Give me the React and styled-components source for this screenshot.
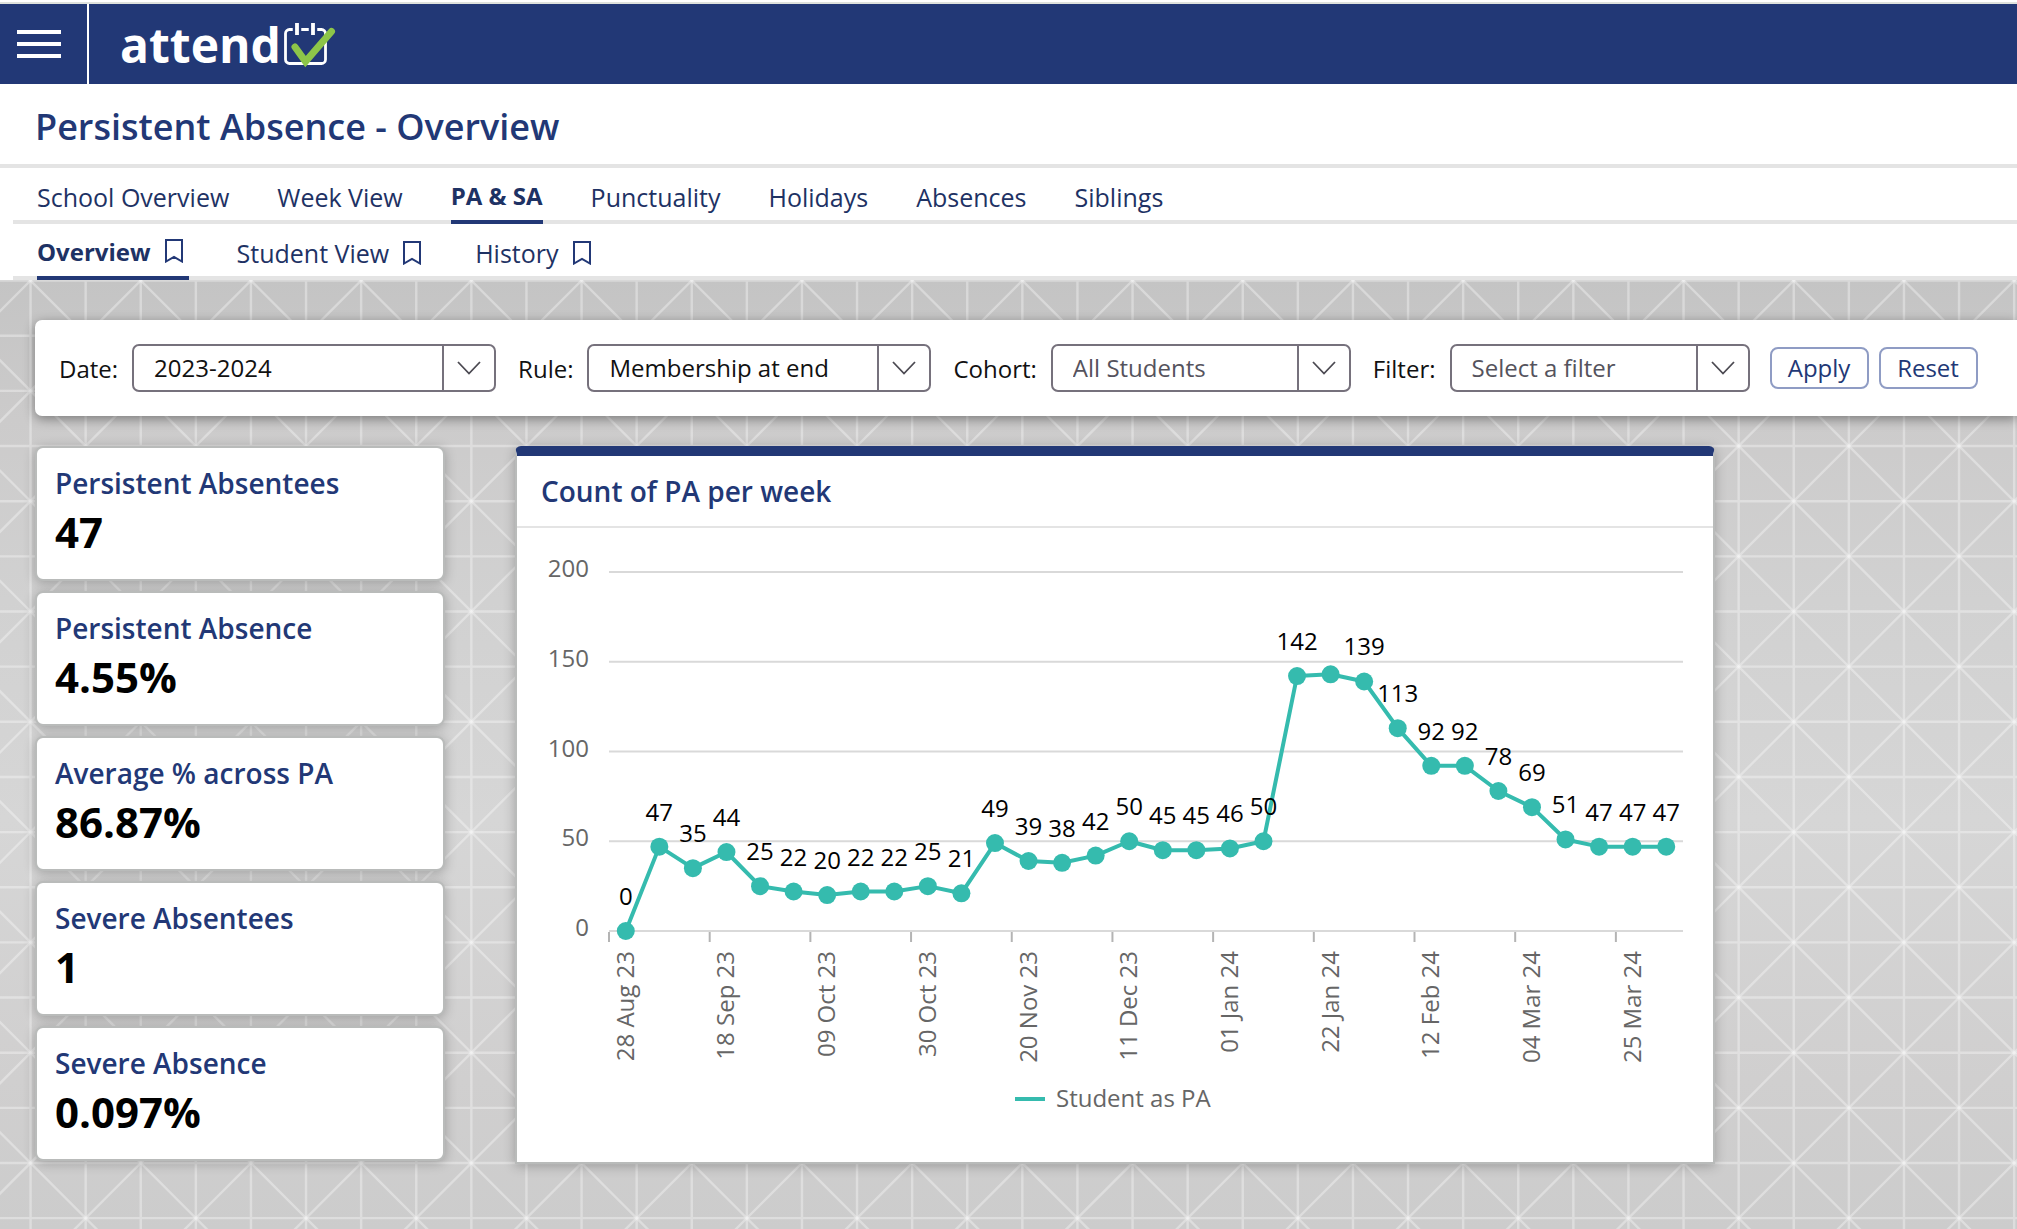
import React, { useState } from 'react'
import styled, { createGlobalStyle, ThemeProvider } from 'styled-components'

const theme = {
  colors: {
    navy: '#223876',
    darkblue: '#1e3264',
    teal: '#35bbae',
    line: '#e4e4e4',
    grid: '#d9d9d9',
    gray: '#666666',
    field: '#76717c',
    placeholder: '#55535d',
    cardBorder: '#b9bbba',
  },
}

// triangle lattice, ten tiles across and ten down
const TILE_W = 110.2
const TILE_H = 110.3
const lattice = () => {
  let straight = ''
  let falling = ''
  let rising = ''
  for (let i = 0; i < 20; i++) {
    straight += `M${(i + 0.5) * (TILE_W / 2)} 0V1103M0 ${(i + 0.5) * (TILE_H / 2)}H1102`
  }
  for (let k = -10; k < 20; k++) {
    falling += `M${k * TILE_W} 0l1102 1103`
    rising += `M${(k + 0.5) * TILE_W} 0l-1102 1103`
  }
  const svg = `<svg xmlns="http://www.w3.org/2000/svg" width="1102" height="1103" viewBox="0 0 1102 1103" fill="none" stroke="#fff" stroke-width="2.4" stroke-opacity=".34"><path d="${straight}"/><path d="${falling}"/><path d="${rising}"/></svg>`
  return `url("data:image/svg+xml,${encodeURIComponent(svg)}")`
}

const tabs = ['School Overview', 'Week View', 'PA & SA', 'Punctuality', 'Holidays', 'Absences', 'Siblings']
const subTabs = ['Overview', 'Student View', 'History']

const filters = [
  { id: 'date', label: 'Date:', value: '2023-2024', width: 364 },
  { id: 'rule', label: 'Rule:', value: 'Membership at end', width: 344 },
  { id: 'cohort', label: 'Cohort:', value: 'All Students', width: 300, muted: true },
  { id: 'filter', label: 'Filter:', value: 'Select a filter', width: 300, muted: true },
]

const stats = [
  { title: 'Persistent Absentees', value: '47' },
  { title: 'Persistent Absence', value: '4.55%' },
  { title: 'Average % across PA', value: '86.87%' },
  { title: 'Severe Absentees', value: '1' },
  { title: 'Severe Absence', value: '0.097%' },
]

const weekly = [
  0, 47, 35, 44, 25, 22, 20, 22, 22, 25, 21, 49, 39, 38, 42, 50, 45, 45, 46, 50, 142, 143, 139, 113, 92, 92,
  78, 69, 51, 47, 47, 47,
]
const weekLabels = [
  '28 Aug 23', '18 Sep 23', '09 Oct 23', '30 Oct 23', '20 Nov 23', '11 Dec 23',
  '01 Jan 24', '22 Jan 24', '12 Feb 24', '04 Mar 24', '25 Mar 24',
]

const PLOT = { left: 92, right: 1166, top: 44, bottom: 403 }
const step = (PLOT.right - PLOT.left) / weekly.length
const xAt = (i) => PLOT.left + step * (i + 0.5)
const yAt = (v) => PLOT.bottom - ((PLOT.bottom - PLOT.top) * v) / 200

function Logo() {
  return (
    <LogoLink href='#home' aria-label='attend home'>
      attend
      <svg width='52' height='46' viewBox='0 0 52 46' fill='none' overflow='visible'>
        <rect x='2.5' y='8.5' width='40' height='34' rx='4' stroke='#fff' strokeWidth='2.8' />
        <path d='M14 5v7M30 5v7' stroke='#223876' strokeWidth='8.5' />
        <path d='M14 2v12M30 2v12' stroke='#fff' strokeWidth='3.8' />
        <path d='M12 26L22.5 40.500L48.500 10.500' stroke='#8dc549' strokeWidth='7' strokeLinecap='round' />
      </svg>
    </LogoLink>
  )
}

function Bookmark() {
  return (
    <svg width='18' height='24' viewBox='0 0 18 24' fill='none' stroke='#223876' strokeWidth='2'>
      <path d='M1 1h16v21.500l-8-4.500l-8 4.500z' />
    </svg>
  )
}

function Chart() {
  return (
    <ChartSvg viewBox='0 0 1196 634' role='img' aria-label='Count of PA per week'>
      {[0, 50, 100, 150, 200].map((v) => (
        <g key={v}>
          <line className='grid' x1={PLOT.left} x2={PLOT.right} y1={yAt(v)} y2={yAt(v)} />
          <text className='axis' x='72' y={yAt(v) + 5} textAnchor='end'>
            {v}
          </text>
        </g>
      ))}
      {weekLabels.map((label, i) => (
        <g key={label}>
          <line
            className='tick'
            x1={PLOT.left + step * i * 3}
            x2={PLOT.left + step * i * 3}
            y1={PLOT.bottom + 1}
            y2={PLOT.bottom + 11}
          />
          <text
            className='axis'
            textAnchor='end'
            transform={`translate(${xAt(i * 3) + 8} ${PLOT.bottom + 20}) rotate(-90)`}
          >
            {label}
          </text>
        </g>
      ))}
      <polyline className='series' points={weekly.map((v, i) => `${xAt(i)},${yAt(v)}`).join(' ')} />
      {weekly.map((v, i) => (
        <circle key={i} className='dot' cx={xAt(i)} cy={yAt(v)} r='9' />
      ))}
      {weekly.map(
        (v, i) =>
          v !== 143 && (
            <text key={i} className='value' x={xAt(i)} y={yAt(v) - 26} textAnchor='middle'>
              {v}
            </text>
          )
      )}
      <line className='series' x1='498' x2='528' y1='571' y2='571' />
      <text className='axis' x='539' y='579'>
        Student as PA
      </text>
    </ChartSvg>
  )
}

function App() {
  const [tab, setTab] = useState('PA & SA')
  const [subTab, setSubTab] = useState('Overview')

  return (
    <ThemeProvider theme={theme}>
      <GlobalStyle />
      <Page>
        <TopBar>
          <MenuButton aria-label='Menu'>
            <span />
            <span />
            <span />
          </MenuButton>
          <Logo />
        </TopBar>
        <TitleBar>
          <h1>Persistent Absence - Overview</h1>
        </TitleBar>
        <TabBar>
          {tabs.map((name) => (
            <Tab key={name} href='#tab' $active={name === tab} onClick={() => setTab(name)}>
              {name}
            </Tab>
          ))}
        </TabBar>
        <TabBar>
          {subTabs.map((name) => (
            <SubTab key={name} href='#view' $active={name === subTab} onClick={() => setSubTab(name)}>
              {name}
              <Bookmark />
            </SubTab>
          ))}
        </TabBar>
        <Main>
          <FilterBar onSubmit={(e) => e.preventDefault()}>
            {filters.map(({ id, label, value, width, muted }) => (
              <Field key={id}>
                <label htmlFor={id}>{label}</label>
                <SelectBox $width={width} $muted={muted}>
                  <select id={id}>
                    <option>{value}</option>
                  </select>
                  <svg width='24' height='14' viewBox='0 0 24 14' fill='none' stroke='#4c4a52' strokeWidth='1.800'>
                    <path d='M1 1l11 11.500l11-11.500' />
                  </svg>
                </SelectBox>
              </Field>
            ))}
            <Actions>
              <Button type='submit'>Apply</Button>
              <Button type='reset'>Reset</Button>
            </Actions>
          </FilterBar>
          <Content>
            <Stats>
              {stats.map(({ title, value }) => (
                <StatCard key={title}>
                  <h2>{title}</h2>
                  <p>{value}</p>
                </StatCard>
              ))}
            </Stats>
            <ChartCard>
              <h2>Count of PA per week</h2>
              <Chart />
            </ChartCard>
          </Content>
        </Main>
      </Page>
    </ThemeProvider>
  )
}

const GlobalStyle = createGlobalStyle`
  * {
    box-sizing: border-box;
    margin: 0;
    padding: 0;
  }
  body {
    background: white;
    font-family: 'Open Sans', 'Noto Sans', sans-serif;
    font-size: 24px;
    overflow-x: hidden;
  }
  a {
    text-decoration: none;
  }
  svg {
    display: block;
    flex-shrink: 0;
  }
`

const Page = styled.div`
  min-height: 100vh;
  display: flex;
  flex-direction: column;
  padding-top: 2px;
`

const TopBar = styled.header`
  display: flex;
  height: 82px;
  border-top: 2px solid #dfe2dd;
  background-color: ${({ theme }) => theme.colors.navy};
`

const MenuButton = styled.button`
  display: flex;
  flex-direction: column;
  gap: 8px;
  width: 89px;
  padding: 26px 26px 0 17px;
  border: none;
  border-right: 2px solid white;
  background: none;
  cursor: pointer;
  span {
    height: 4px;
    background-color: white;
  }
`

const LogoLink = styled.a`
  display: flex;
  align-items: center;
  gap: 2px;
  padding-left: 31px;
  color: white;
  font-size: 48px;
  font-weight: 700;
`

const TitleBar = styled.div`
  display: flex;
  align-items: center;
  height: 84px;
  padding: 4px 35px 0;
  border-bottom: 4px solid ${({ theme }) => theme.colors.line};
  h1 {
    color: ${({ theme }) => theme.colors.navy};
    font-size: 36px;
    font-weight: 600;
  }
`

const TabBar = styled.nav`
  display: flex;
  gap: 48px;
  height: 56px;
  margin-left: 13px;
  padding: 2px 0 0 24px;
  box-shadow: inset 0 -4px ${({ theme }) => theme.colors.line};
`

const Tab = styled.a`
  display: flex;
  align-items: center;
  color: ${({ theme }) => theme.colors.darkblue};
  font-size: ${({ $active }) => ($active ? 24 : 25)}px;
  font-weight: ${({ $active }) => ($active ? 700 : 400)};
  border-bottom: ${({ $active, theme }) => ($active ? `4px solid ${theme.colors.navy}` : 'none')};
`

const SubTab = styled(Tab)`
  gap: 14px;
  padding-right: 6px;
`

const Main = styled.main`
  flex: 1;
  padding: 40px 0 40px 35px;
  background-image: ${lattice()},
    linear-gradient(#c4c4c4 0, #cccbcb 140px, #d1d1d1 320px, #d6d6d6 540px, #d0cfcf 800px, #cccccc 100%);
  background-size: 1102px 1103px, 100% 100%;
  background-position: 3px -27px, 0 0;
`

const FilterBar = styled.form`
  display: flex;
  align-items: center;
  gap: 22px;
  height: 96px;
  padding-left: 24px;
  background-color: white;
  border-radius: 7px 0 0 7px;
  box-shadow: 0 3px 12px rgba(0, 0, 0, 0.4);
`

const Field = styled.div`
  display: flex;
  align-items: center;
  gap: 14px;
  color: #111;
`

const SelectBox = styled.div`
  position: relative;
  width: ${({ $width }) => $width}px;
  height: 48px;
  select {
    appearance: none;
    width: 100%;
    height: 100%;
    padding: 0 70px 2px 20px;
    border: 2px solid ${({ theme }) => theme.colors.field};
    border-radius: 7px;
    background: linear-gradient(${({ theme }) => theme.colors.field} 0 0) right 50px top / 2px 100% no-repeat white;
    color: ${({ $muted, theme }) => ($muted ? theme.colors.placeholder : '#111')};
    font: inherit;
  }
  svg {
    position: absolute;
    right: 15px;
    top: 17px;
    pointer-events: none;
  }
`

const Actions = styled.div`
  display: flex;
  gap: 10px;
  margin-left: -2px;
`

const Button = styled.button`
  width: 99px;
  height: 42px;
  padding-bottom: 2px;
  border: 2px solid #8f9cc4;
  border-radius: 8px;
  background-color: white;
  color: ${({ theme }) => theme.colors.navy};
  font: inherit;
  cursor: pointer;
`

const Content = styled.div`
  display: grid;
  grid-template-columns: 410px minmax(0, 1200px);
  align-items: start;
  gap: 70px;
  margin-top: 30px;
  h2 {
    color: ${({ theme }) => theme.colors.navy};
    font-size: 28px;
    font-weight: 600;
  }
`

const Stats = styled.section`
  display: flex;
  flex-direction: column;
  gap: 10px;
`

const StatCard = styled.article`
  height: 135px;
  padding: 16px 18px;
  background-color: white;
  border: 2px solid ${({ theme }) => theme.colors.cardBorder};
  border-radius: 8px;
  box-shadow: 0 2px 12px rgba(0, 0, 0, 0.25);
  h2 {
    line-height: 38px;
  }
  p {
    color: black;
    font-size: 42px;
    font-weight: 700;
    line-height: 60px;
  }
`

const ChartCard = styled.section`
  background-color: white;
  border: 2px solid ${({ theme }) => theme.colors.cardBorder};
  border-top: 10px solid ${({ theme }) => theme.colors.navy};
  border-radius: 6px 6px 0 0;
  box-shadow: 0 2px 12px rgba(0, 0, 0, 0.25);
  h2 {
    height: 72px;
    padding: 0 24px;
    border-bottom: 2px solid ${({ theme }) => theme.colors.line};
    line-height: 70px;
  }
`

const ChartSvg = styled.svg`
  width: 100%;
  height: auto;
  .grid {
    stroke: ${({ theme }) => theme.colors.grid};
    stroke-width: 2;
  }
  .tick {
    stroke: #b4b4b4;
    stroke-width: 2;
  }
  .axis {
    fill: ${({ theme }) => theme.colors.gray};
    font-size: 24px;
  }
  .value {
    fill: black;
    font-size: 24px;
  }
  .series {
    fill: none;
    stroke: ${({ theme }) => theme.colors.teal};
    stroke-width: 4;
    stroke-linejoin: round;
  }
  .dot {
    fill: ${({ theme }) => theme.colors.teal};
  }
`

export default App
